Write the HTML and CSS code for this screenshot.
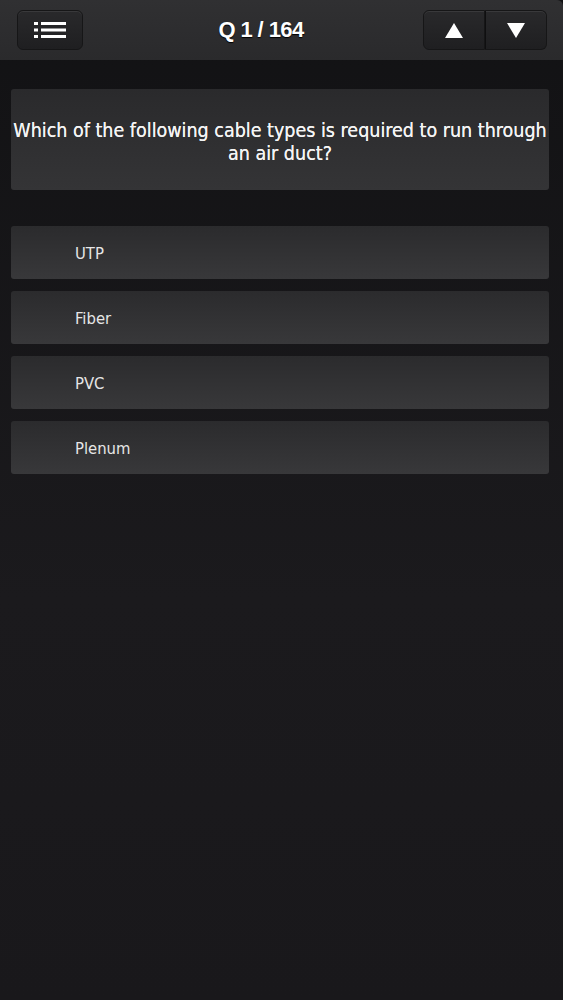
FILE: index.html
```html
<!DOCTYPE html>
<html lang="en">
<head>
    <meta charset="UTF-8">
    <meta name="viewport" content="width=device-width, initial-scale=1.0">
    <title>Quiz</title>
    <link rel="stylesheet" href="styles.css">
</head>
<body>

    <div class="top-bar">
        <button class="btn menu-btn">
            <svg width="32" height="20" viewBox="0 0 32 20">
                <rect x="0" y="2" width="4" height="3" fill="#fff"/>
                <rect x="0" y="8.5" width="4" height="3" fill="#fff"/>
                <rect x="0" y="15" width="4" height="3" fill="#fff"/>
                <rect x="7" y="2" width="25" height="3" fill="#fff"/>
                <rect x="7" y="8.5" width="25" height="3" fill="#fff"/>
                <rect x="7" y="15" width="25" height="3" fill="#fff"/>
            </svg>
        </button>
        <h1 class="title">Q 1 / 164</h1>
        <div class="nav-group">
            <button class="btn nav-btn">
                <svg width="18" height="15" viewBox="0 0 18 15"><polygon points="9,0 18,15 0,15" fill="#fff"/></svg>
            </button>
            <button class="btn nav-btn">
                <svg width="18" height="15" viewBox="0 0 18 15"><polygon points="0,0 18,0 9,15" fill="#fff"/></svg>
            </button>
        </div>
    </div>

    <div class="content">
        <div class="question">
            Which of the following cable types is required to run through an air duct?
        </div>

        <div class="answers">
            <div class="answer">UTP</div>
            <div class="answer">Fiber</div>
            <div class="answer">PVC</div>
            <div class="answer">Plenum</div>
        </div>
    </div>

</body>
</html>
```

FILE: styles.css
```css
/* General Styling */
html, body {
    height: 100%;
}

body {
    margin: 0;
    font-family: "DejaVu Sans", sans-serif;
    background: linear-gradient(#121214, #1b1a1d 60%, #19181b);
    color: #fff;
}

.top-bar {
    height: 60px;
    background: linear-gradient(#303032, #2a2a2c);
    display: flex;
    align-items: center;
    justify-content: space-between;
    padding: 0 16px 0 17px;
    box-sizing: border-box;
    border-top-right-radius: 6px;
}

.title {
    margin: 0 0 0 16px;
    font-family: "Liberation Sans", Arial, sans-serif;
    font-size: 22px;
    font-weight: bold;
    color: #fff;
    text-shadow: 0 1px 1px #000;
    letter-spacing: -0.6px;
}

.btn {
    height: 40px;
    border: 1px solid #161617;
    border-radius: 6px;
    background: linear-gradient(#29292b, #1f1f21);
    box-shadow: inset 0 1px 0 rgba(255, 255, 255, 0.08);
    display: flex;
    align-items: center;
    justify-content: center;
    padding: 0;
    cursor: pointer;
}

.menu-btn {
    width: 66px;
}

.nav-group {
    display: flex;
}

.nav-btn {
    width: 62px;
}

.nav-btn:first-child {
    border-top-right-radius: 0;
    border-bottom-right-radius: 0;
}

.nav-btn:last-child {
    border-top-left-radius: 0;
    border-bottom-left-radius: 0;
    border-left-color: #0f0f10;
}

.content {
    padding: 29px 14px 0 11px;
}

.question {
    min-height: 101px;
    box-sizing: border-box;
    background: linear-gradient(#2a2a2c, #343436);
    border-radius: 3px;
    display: flex;
    align-items: center;
    justify-content: center;
    text-align: center;
    font-family: "DejaVu Sans", sans-serif;
    font-stretch: condensed;
    font-size: 19.5px;
    line-height: 23px;
    color: #f4f4f4;
    text-shadow: 0 0 0.4px #f4f4f4;
    padding: 5px 0 0;
}

.answers {
    margin-top: 36px;
    display: flex;
    flex-direction: column;
    gap: 12px;
}

.answer {
    height: 53px;
    box-sizing: border-box;
    background: linear-gradient(#2b2b2d, #38383a);
    border-radius: 3px;
    display: flex;
    align-items: center;
    padding-left: 64px;
    padding-top: 2px;
    font-family: "DejaVu Sans", sans-serif;
    font-stretch: condensed;
    font-size: 16.5px;
    color: #e6e6e6;
}
```
